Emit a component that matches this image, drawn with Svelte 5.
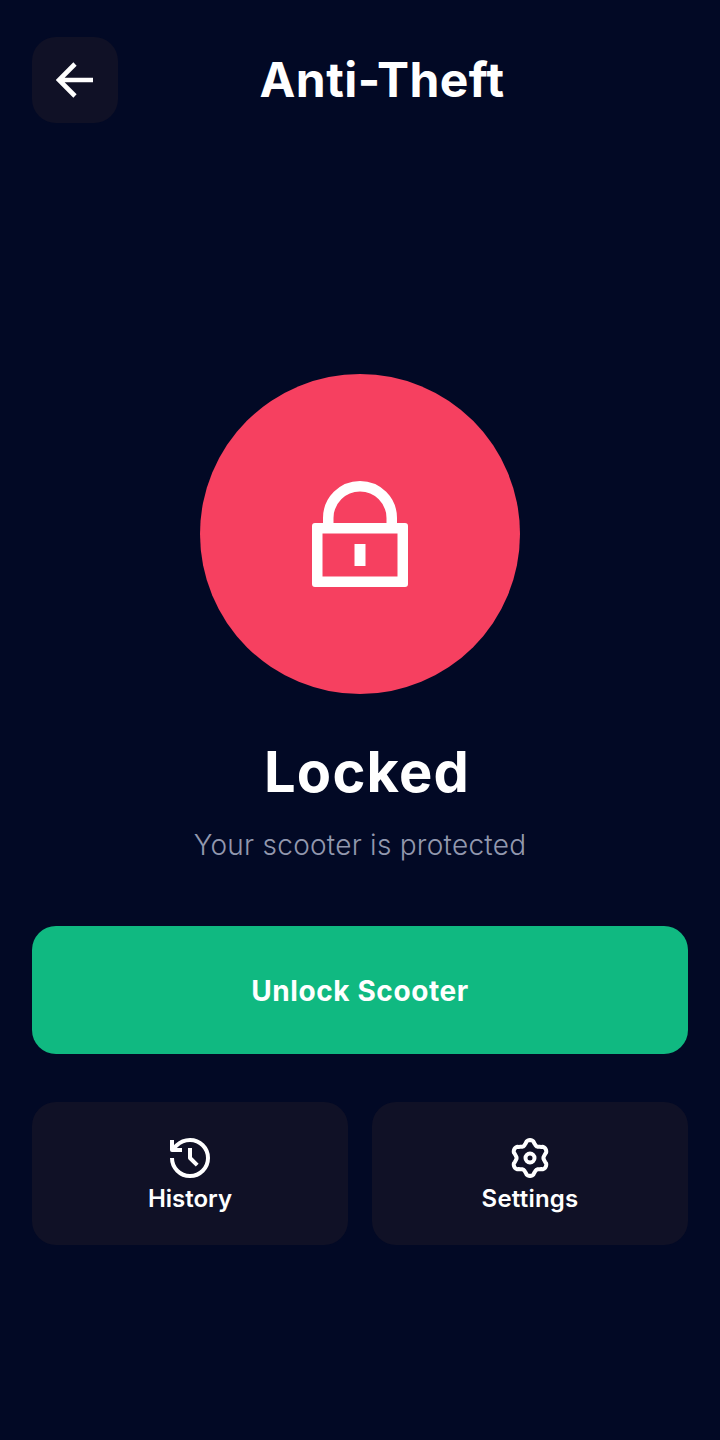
<script lang="ts">
  // six soft lobes round the settings cog, flattened on top
  function gearPath(cx: number, cy: number) {
    const pts: string[] = []
    for (let i = 0; i < 96; i++) {
      const a = (i / 96) * Math.PI * 2
      const c = Math.cos(6 * a)
      const r = 15.7 + 2.3 * (c > 0 ? Math.pow(c, 0.55) : c)
      const x = cx + r * Math.sin(a)
      const y = cy - r * Math.cos(a)
      pts.push(`${x.toFixed(2)} ${y.toFixed(2)}`)
    }
    return 'M' + pts.join('L') + 'Z'
  }
  const gear = gearPath(24, 24)
</script>

<div class="page">
  <header class="header">
    <button class="back" aria-label="Back">
      <svg width="38" height="38" viewBox="0 0 38 38" fill="none" stroke="#fff" stroke-width="4.6">
        <path d="M37 19H3M19 3L3 19l16 16" />
      </svg>
    </button>
    <h1 class="title">Anti-Theft</h1>
    <div class="spacer"></div>
  </header>

  <main class="status">
    <div class="circle">
      <svg width="96" height="106" viewBox="0 0 96 106" fill="none" stroke="#fff" stroke-width="10.5">
        <path
          fill="#fff"
          fill-rule="evenodd"
          stroke="none"
          d="M3 42H93a3 3 0 0 1 3 3V103a3 3 0 0 1-3 3H3a3 3 0 0 1-3-3V45a3 3 0 0 1 3-3ZM10.5 52.5V95.5H85.5V52.5Z"
        />
        <path d="M16.25 44V37a31.75 31.75 0 0 1 63.5 0V44" />
        <path d="M48 63v22" stroke-width="11" />
      </svg>
    </div>
    <h2 class="state">Locked</h2>
    <p class="note">Your scooter is protected</p>
  </main>

  <section class="actions">
    <button class="unlock">Unlock Scooter</button>
    <div class="grid">
      <button class="card">
        <svg width="48" height="48" viewBox="0 0 24 24" fill="none" stroke="#fff" stroke-width="2" stroke-linejoin="round">
          <path d="M3 12a9 9 0 1 0 9-9 9.75 9.75 0 0 0-6.74 2.74L3 8" />
          <path d="M3 3v5h5" />
          <path d="M12 7v5l3.6 3.6" />
        </svg>
        <span>History</span>
      </button>
      <button class="card">
        <svg width="48" height="48" viewBox="0 0 48 48" fill="none" stroke="#fff" stroke-width="4" stroke-linejoin="round">
          <path d={gear} />
          <circle cx="24" cy="24" r="4.5" />
        </svg>
        <span class="wide">Settings</span>
      </button>
    </div>
  </section>
</div>

<style>
  :global(body) {
    margin: 0;
    background: #020925;
  }

  .page {
    height: 1440px;
    box-sizing: border-box;
    padding: 37px 32px 0;
    background: #020925;
    color: #fff;
    font-family: Inter, "Liberation Sans", sans-serif;
  }

  button {
    border: none;
    color: #fff;
    font-family: inherit;
    padding: 0;
  }

  .header {
    display: flex;
    align-items: center;
  }

  .back {
    width: 86px;
    height: 86px;
    border-radius: 24px;
    background: #101126;
    display: flex;
    align-items: center;
    justify-content: center;
  }

  .title {
    flex: 1;
    margin: 0;
    text-align: center;
    font-size: 48px;
    line-height: 86px;
    font-weight: 700;
    letter-spacing: 0.45px;
  }

  .spacer {
    width: 42px;
  }

  .status {
    margin-top: 251px;
    display: flex;
    flex-direction: column;
    align-items: center;
  }

  .circle {
    width: 320px;
    height: 320px;
    border-radius: 50%;
    background: #f64060;
    display: flex;
    align-items: center;
    justify-content: center;
  }

  .state {
    margin: 39px 0 0;
    padding-left: 14px;
    font-size: 56px;
    line-height: 78px;
    font-weight: 700;
    letter-spacing: 1.2px;
  }

  .note {
    margin: 14px 0 0;
    font-size: 28px;
    line-height: 40px;
    font-weight: 300;
    color: #9298ae;
    letter-spacing: 0.25px;
  }

  .actions {
    margin-top: 61px;
    display: flex;
    flex-direction: column;
    gap: 48px;
  }

  .unlock {
    height: 128px;
    border-radius: 24px;
    background: #10b981;
    font-size: 28px;
    font-weight: 700;
    letter-spacing: 0.6px;
    padding-top: 2px;
  }

  .grid {
    display: grid;
    grid-template-columns: 1fr 1fr;
    gap: 24px;
  }

  .card {
    height: 143px;
    border-radius: 24px;
    background: #101126;
    display: flex;
    flex-direction: column;
    align-items: center;
    justify-content: center;
    font-size: 24px;
    font-weight: 600;
    padding-top: 2px;
  }

  .card span {
    line-height: 32px;
    margin-top: 1px;
  }

  .wide {
    letter-spacing: 0.2px;
  }
</style>
